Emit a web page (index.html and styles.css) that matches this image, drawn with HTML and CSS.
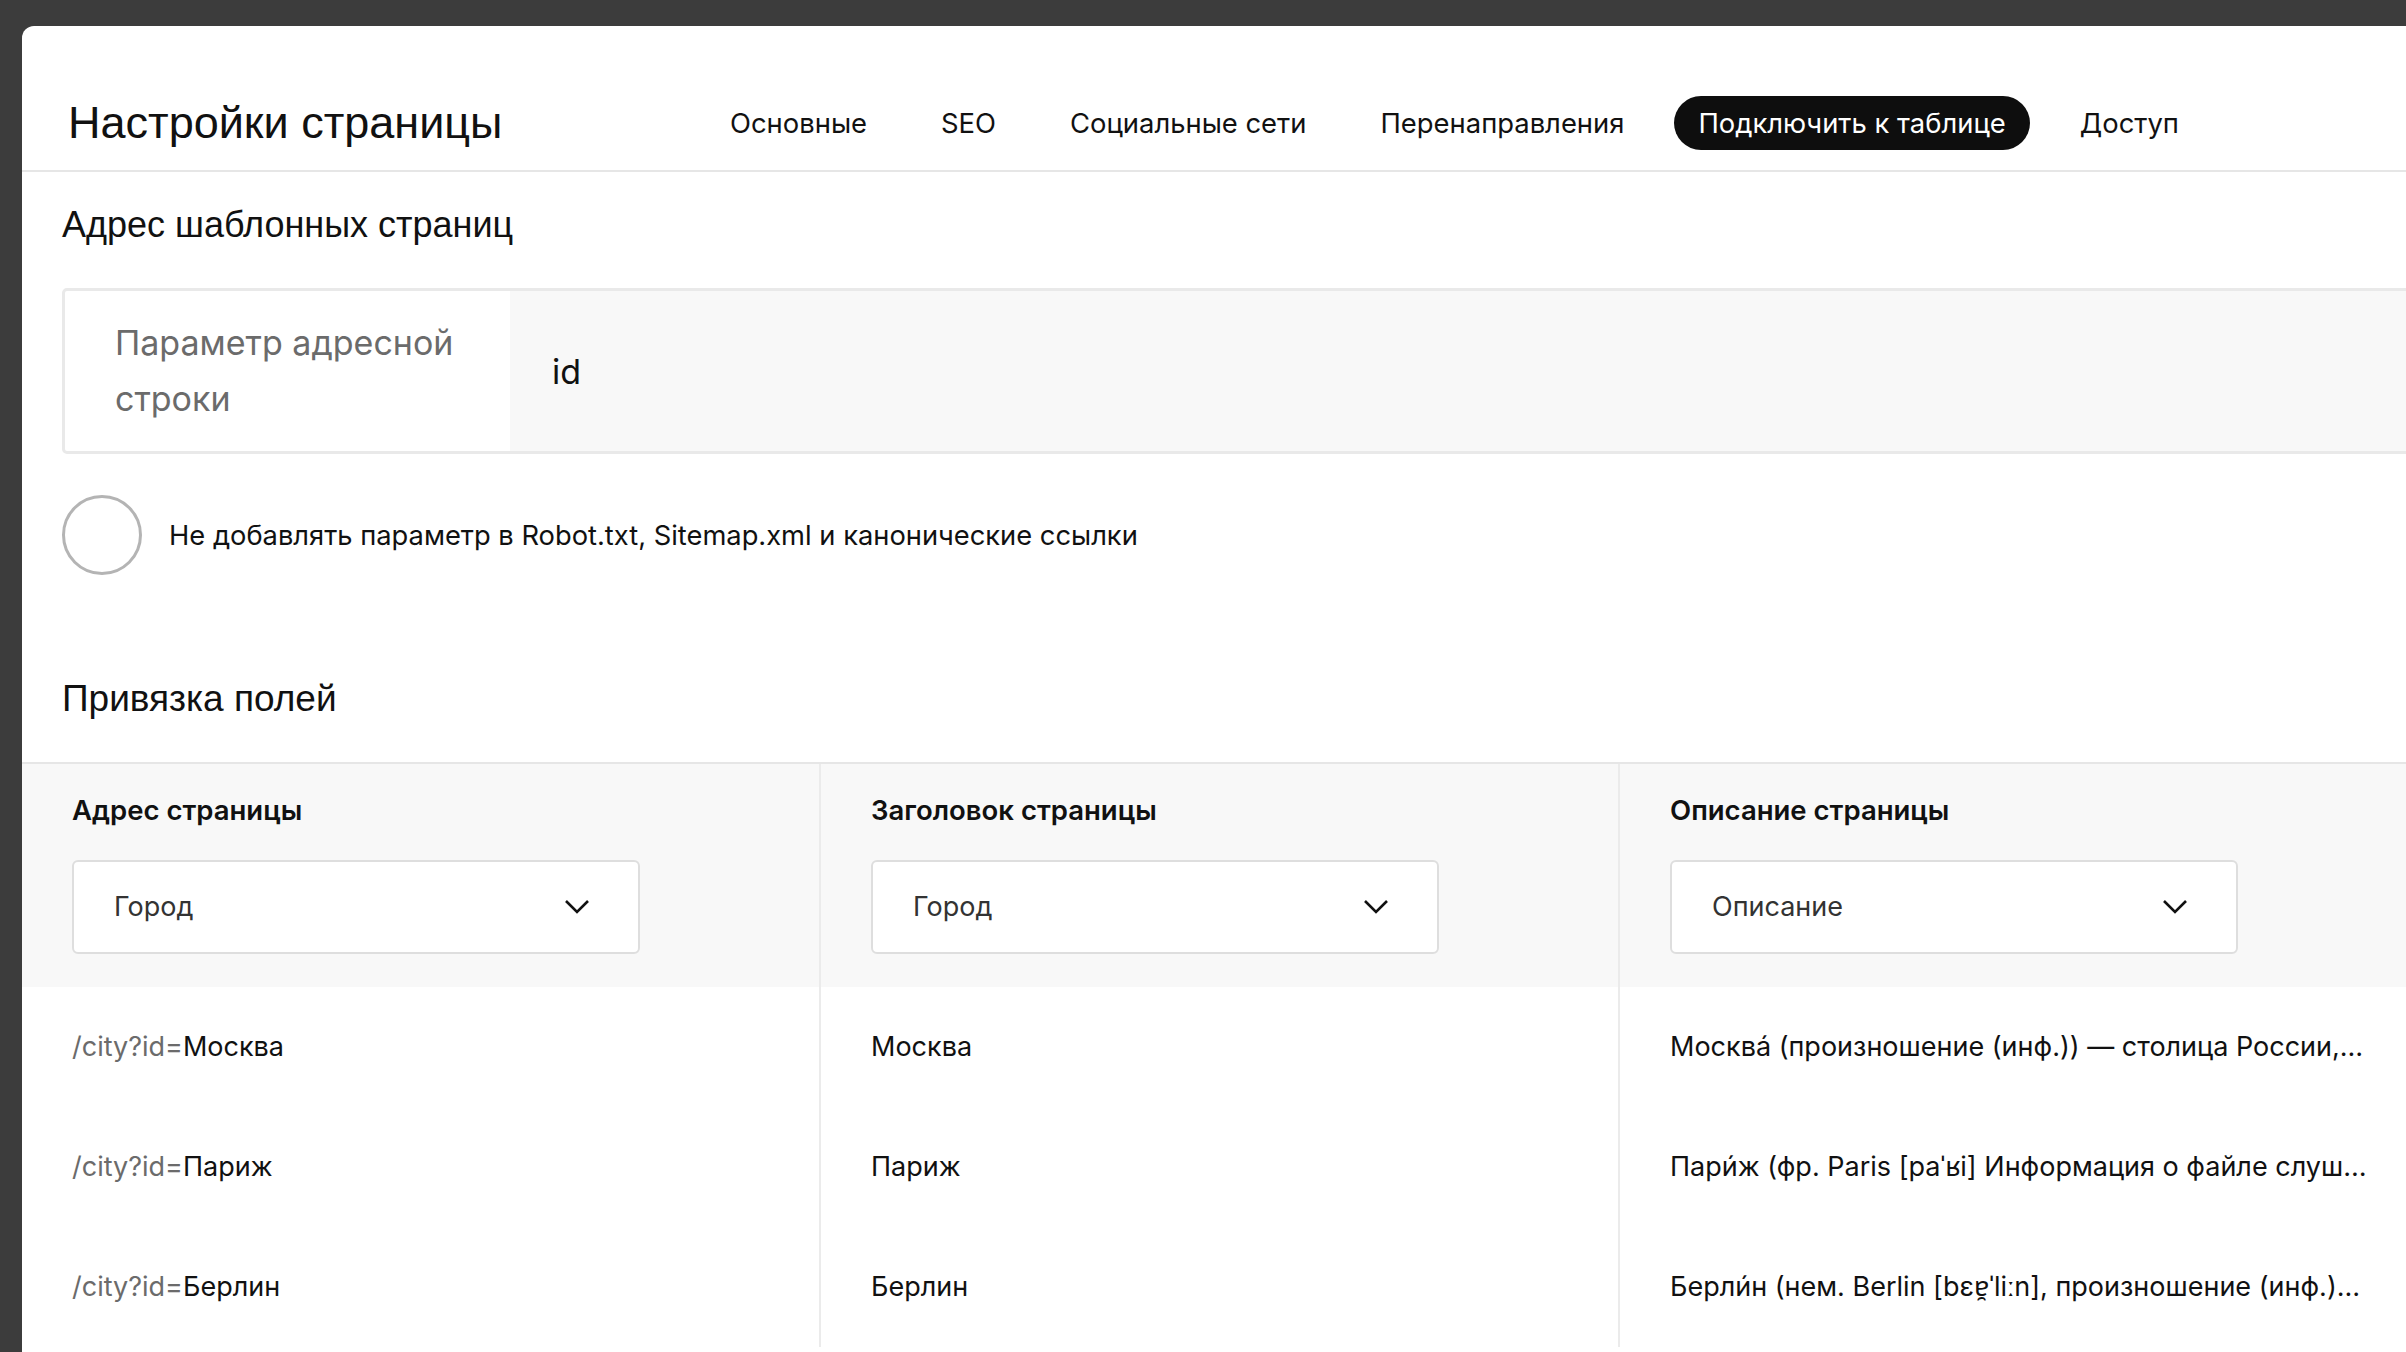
FILE: index.html
```html
<!DOCTYPE html>
<html lang="ru">
<head>
    <meta charset="UTF-8">
    <meta name="viewport" content="width=device-width, initial-scale=1.0">
    <title>Настройки страницы</title>
    <link rel="stylesheet" href="styles.css">
</head>
<body>
    <div class="panel">
        <div class="header">
            <h1 class="title">Настройки страницы</h1>
            <nav class="tabs">
                <a class="tab">Основные</a>
                <a class="tab">SEO</a>
                <a class="tab">Социальные сети</a>
                <a class="tab">Перенаправления</a>
                <a class="tab active">Подключить к таблице</a>
                <a class="tab">Доступ</a>
            </nav>
        </div>

        <div class="section">
            <h2>Адрес шаблонных страниц</h2>
            <div class="param">
                <div class="param-label">Параметр адресной строки</div>
                <div class="param-value">id</div>
            </div>
            <label class="check">
                <span class="check-circle"></span>
                <span>Не добавлять параметр в Robot.txt, Sitemap.xml и канонические ссылки</span>
            </label>
            <h2 class="fields-title">Привязка полей</h2>
        </div>

        <div class="fields">
            <div class="field-head">
                <div class="field-name">Адрес страницы</div>
                <div class="select">Город <svg width="26" height="15" viewBox="0 0 26 15"><polyline points="2,2 13,13 24,2" fill="none" stroke="#111" stroke-width="2.6"/></svg></div>
            </div>
            <div class="field-head">
                <div class="field-name">Заголовок страницы</div>
                <div class="select">Город <svg width="26" height="15" viewBox="0 0 26 15"><polyline points="2,2 13,13 24,2" fill="none" stroke="#111" stroke-width="2.6"/></svg></div>
            </div>
            <div class="field-head">
                <div class="field-name">Описание страницы</div>
                <div class="select">Описание <svg width="26" height="15" viewBox="0 0 26 15"><polyline points="2,2 13,13 24,2" fill="none" stroke="#111" stroke-width="2.6"/></svg></div>
            </div>

            <div class="cell"><span class="muted">/city?id=</span>Москва</div>
            <div class="cell">Москва</div>
            <div class="cell">Москва́ (произношение (инф.)) — столица России, город федерального значения, административный центр Центрального федерального округа</div>

            <div class="cell"><span class="muted">/city?id=</span>Париж</div>
            <div class="cell">Париж</div>
            <div class="cell">Пари́ж (фр. Paris [paˈʁi] Информация о файле слушать) — столица и крупнейший город Франции</div>

            <div class="cell"><span class="muted">/city?id=</span>Берлин</div>
            <div class="cell">Берлин</div>
            <div class="cell">Берли́н (нем. Berlin [bɛɐ̯ˈliːn], произношение (инф.)) — столица и крупнейший город Германии</div>
        </div>
    </div>
</body>
</html>
```

FILE: styles.css
```css
body { margin: 0; background: #3c3c3c; overflow: hidden; font-family: Inter, "Noto Sans", sans-serif; color: #111; }
.panel { margin: 26px 0 0 22px; width: 2440px; min-height: 1400px; background: #fff; border-radius: 12px 0 0 0; }

.header { display: flex; align-items: center; padding: 70px 0 20px 46px; border-bottom: 2px solid #e6e6e6; }
.title { width: 638px; margin: 0; font-family: "Liberation Sans", Arial, sans-serif; font-size: 45px; font-weight: 400; }
.tabs { display: flex; gap: 26px; }
.tab { height: 54px; line-height: 54px; padding: 0 24px; border-radius: 27px; font-size: 27.4px; white-space: nowrap; }
.tab.active { background: #0e0e0e; color: #fff; }

.section { padding: 0 40px; }
h2 { margin: 31px 0 42px; font-family: "Liberation Sans", Arial, sans-serif; font-size: 36px; line-height: 1.2; font-weight: 400; }
.param { display: flex; border: 3px solid #e9e9e9; border-radius: 5px; }
.param-label { width: 445px; box-sizing: border-box; padding: 24px 50px; font-size: 34px; line-height: 56px; color: #6b6b6b; }
.param-value { flex: 1; display: flex; align-items: center; padding-left: 42px; background: #f8f8f8; font-size: 34px; }
.check { display: flex; align-items: center; gap: 27px; margin-top: 41px; font-size: 27.3px; }
.check-circle { width: 80px; height: 80px; box-sizing: border-box; border: 3px solid #b4b4b4; border-radius: 50%; }
.fields-title { margin: 102px 0 40px; font-size: 37px; }

.fields { display: grid; grid-template-columns: repeat(3, 799px); border-top: 2px solid #e6e6e6; }
.field-head { background: #f8f8f8; padding: 29px 50px 33px; border-right: 2px solid #ebebeb; }
.field-name { font-size: 27.5px; line-height: 34px; font-weight: 600; margin-bottom: 33px; }
.select { display: flex; align-items: center; justify-content: space-between; width: 568px; height: 94px; box-sizing: border-box; padding: 0 48px 0 40px; background: #fff; border: 2px solid #dedede; border-radius: 6px; font-size: 27px; color: #333; }
.cell { height: 120px; display: flex; align-items: center; padding: 0 50px; border-right: 2px solid #ebebeb; font-size: 27px; white-space: nowrap; overflow: hidden; }
.cell:nth-child(3n) { display: block; line-height: 120px; text-overflow: ellipsis; }
.muted { color: #6b6b6b; }
```
